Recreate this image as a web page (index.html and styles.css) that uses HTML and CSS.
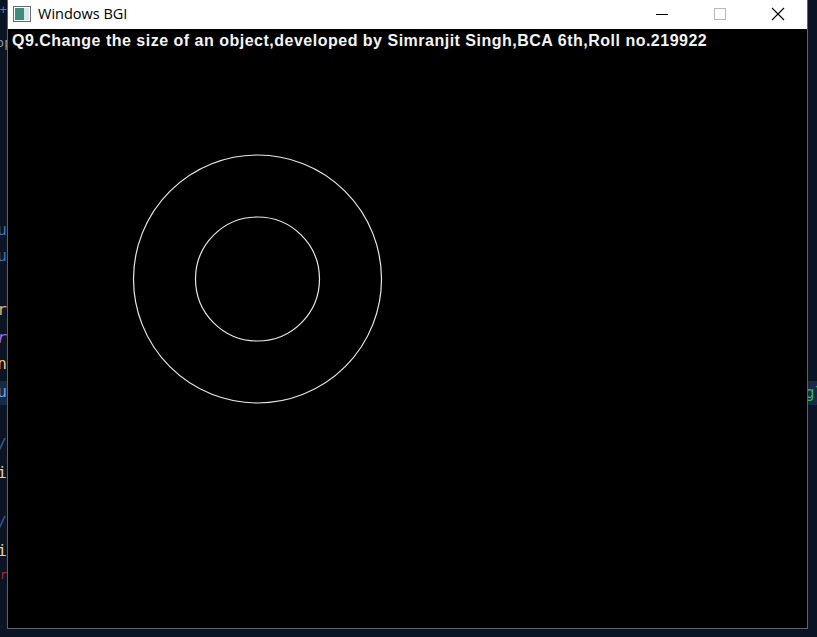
FILE: index.html
```html
<!DOCTYPE html>
<html>
<head>
<meta charset="utf-8">
<link rel="stylesheet" href="styles.css">
</head>
<body>
<div class="desk">
  <div class="strip left">
    <span class="g g1">+</span>
    <span class="g g2">op</span>
    <span class="g g3">u</span>
    <span class="g g4">u</span>
    <span class="g g5">r</span>
    <span class="g g6">r</span>
    <span class="g g7">n</span>
    <div class="hl"></div>
    <span class="g g8">u</span>
    <span class="g g9">/</span>
    <span class="g g10">i</span>
    <span class="g g11">/</span>
    <span class="g g12">i</span>
    <span class="g g13">r</span>
  </div>
  <div class="window">
    <div class="titlebar">
      <svg class="appicon" width="18" height="16" viewBox="0 0 18 16">
        <rect x="0.5" y="0.5" width="17" height="15" fill="#fff" stroke="#6a6a6a"/>
        <rect x="2" y="2" width="9" height="12" fill="#3f8c7c"/>
        <rect x="11" y="2" width="5" height="12" fill="#d8e6ee"/>
      </svg>
      <span class="title">Windows BGI</span>
      <div class="controls">
        <span class="ctl"><svg width="12" height="12" viewBox="0 0 12 12"><line x1="0" y1="6.5" x2="12" y2="6.5" stroke="#000" stroke-width="1"/></svg></span>
        <span class="ctl"><svg width="12" height="12" viewBox="0 0 12 12"><rect x="0.5" y="0.5" width="11" height="11" fill="none" stroke="#b8b8b8"/></svg></span>
        <span class="ctl"><svg width="14" height="14" viewBox="0 0 14 14"><path d="M1 1 L13 13 M13 1 L1 13" stroke="#000" stroke-width="1.1"/></svg></span>
      </div>
    </div>
    <div class="canvas">
      <div class="caption">Q9.Change the size of an object,developed by Simranjit Singh,BCA 6th,Roll no.219922</div>
      <svg class="shapes" width="800" height="599" viewBox="0 0 800 599">
        <circle cx="249.5" cy="250" r="124" fill="none" stroke="#e8e8e8" stroke-width="1.2"/>
        <circle cx="249.5" cy="250" r="62" fill="none" stroke="#e8e8e8" stroke-width="1.2"/>
      </svg>
    </div>
  </div>
  <div class="strip right">
    <div class="hl"></div>
    <span class="g gr">gl</span>
  </div>
</div>
</body>
</html>
```
FILE: styles.css
```css
html, body {
  margin: 0;
  padding: 0;
  background: #0b1422;
  width: 817px;
  height: 637px;
  overflow: hidden;
}
.desk {
  display: flex;
  height: 637px;
}
.strip {
  position: relative;
  overflow: hidden;
  background: #0b1422;
  font-family: "DejaVu Sans Mono", monospace;
  font-size: 16px;
}
.strip.left { width: 7px; }
.strip.right { flex: 1; }
.hl {
  position: absolute;
  left: 0;
  right: 0;
  top: 381px;
  height: 24px;
  background: #162a48;
}
.g {
  position: absolute;
  line-height: 1;
}
.left .g { right: 0; }
.g1 { top: 4px; color: #3f7fc4; font-size: 12px; }
.g2 { top: 36px; color: #8a96a8; font-size: 13px; right: -5px !important; }
.g3 { top: 222px; color: #3c6fb8; }
.g4 { top: 248px; color: #3c6fb8; }
.g5 { top: 302px; color: #e0b070; }
.g6 { top: 330px; color: #a070e0; font-style: italic; }
.g7 { top: 356px; color: #e0c890; }
.g8 { top: 384px; color: #6f9fe0; }
.g9 { top: 437px; color: #3a5a9a; }
.g10 { top: 465px; color: #e8d090; }
.g11 { top: 515px; color: #3a5a9a; }
.g12 { top: 543px; color: #e8d090; }
.g13 { top: 569px; color: #a03040; font-size: 12px; }
.gr { top: 385px; left: -3px; color: #3cb050; }
.window {
  width: 799px;
  height: 628px;
  display: flex;
  flex-direction: column;
  border-left: 1px solid #5a6470;
  border-right: 1px solid #5a6470;
  border-bottom: 1px solid #5a6470;
  background: #000;
}
.titlebar {
  height: 29px;
  background: #fff;
  display: flex;
  align-items: center;
  padding-left: 5px;
  flex-shrink: 0;
}
.appicon { margin-right: 7px; margin-top: -1px; }
.title {
  font-family: "Open Sans", "Noto Sans", sans-serif;
  font-size: 14.5px;
  color: #000;
  margin-top: -2px;
}
.controls {
  margin-left: auto;
  display: flex;
  height: 29px;
}
.ctl {
  width: 58px;
  display: flex;
  align-items: center;
  justify-content: center;
  margin-top: -2px;
}
.canvas {
  position: relative;
  flex: 1;
  background: #000;
  overflow: hidden;
}
.caption {
  position: relative;
  z-index: 1;
  padding: 2px 0 0 4px;
  font-family: "Liberation Sans", Arial, sans-serif;
  font-weight: bold;
  font-size: 16px;
  line-height: 19px;
  color: #f4f4f4;
  letter-spacing: 0.5px;
  white-space: nowrap;
}
.shapes {
  position: absolute;
  left: 0;
  top: 0;
}
```
